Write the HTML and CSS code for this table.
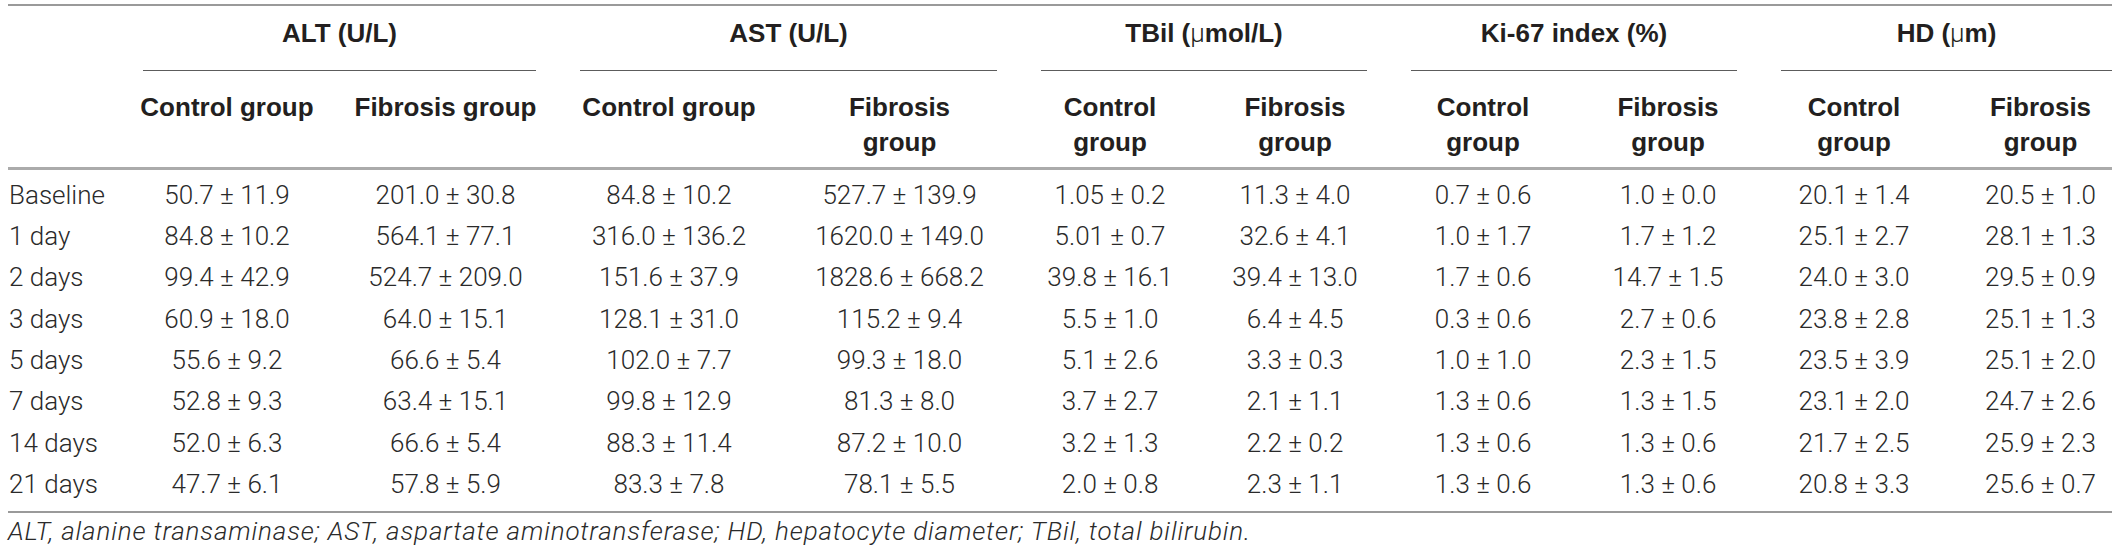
FILE: index.html
```html
<!DOCTYPE html>
<html lang="en">
<head>
    <meta charset="UTF-8">
    <title>Serum markers and hepatocyte measurements</title>
    <link rel="stylesheet" href="styles.css">
</head>
<body>
    <table class="results">
        <colgroup>
            <col class="c-stub">
            <col class="c-alt-ctrl">
            <col class="c-alt-fib">
            <col class="c-ast-ctrl">
            <col class="c-ast-fib">
            <col class="c-tbil-ctrl">
            <col class="c-tbil-fib">
            <col class="c-ki-ctrl">
            <col class="c-ki-fib">
            <col class="c-hd-ctrl">
            <col class="c-hd-fib">
        </colgroup>
        <thead>
            <tr class="group-row">
                <th class="stub"></th>
                <th colspan="2"><div class="group-title">ALT (U/L)</div></th>
                <th colspan="2"><div class="group-title">AST (U/L)</div></th>
                <th colspan="2"><div class="group-title">TBil (<span class="mu">μ</span>mol/L)</div></th>
                <th colspan="2"><div class="group-title">Ki-67 index (%)</div></th>
                <th colspan="2"><div class="group-title">HD (<span class="mu">μ</span>m)</div></th>
            </tr>
            <tr class="sub-row">
                <th class="stub"></th>
                <th>Control group</th>
                <th>Fibrosis group</th>
                <th>Control group</th>
                <th>Fibrosis<br>group</th>
                <th>Control<br>group</th>
                <th>Fibrosis<br>group</th>
                <th>Control<br>group</th>
                <th>Fibrosis<br>group</th>
                <th>Control<br>group</th>
                <th>Fibrosis<br>group</th>
            </tr>
        </thead>
        <tbody>
            <tr>
                <td>Baseline</td>
                <td>50.7 ± 11.9</td><td>201.0 ± 30.8</td>
                <td>84.8 ± 10.2</td><td>527.7 ± 139.9</td>
                <td>1.05 ± 0.2</td><td>11.3 ± 4.0</td>
                <td>0.7 ± 0.6</td><td>1.0 ± 0.0</td>
                <td>20.1 ± 1.4</td><td>20.5 ± 1.0</td>
            </tr>
            <tr>
                <td>1 day</td>
                <td>84.8 ± 10.2</td><td>564.1 ± 77.1</td>
                <td>316.0 ± 136.2</td><td>1620.0 ± 149.0</td>
                <td>5.01 ± 0.7</td><td>32.6 ± 4.1</td>
                <td>1.0 ± 1.7</td><td>1.7 ± 1.2</td>
                <td>25.1 ± 2.7</td><td>28.1 ± 1.3</td>
            </tr>
            <tr>
                <td>2 days</td>
                <td>99.4 ± 42.9</td><td>524.7 ± 209.0</td>
                <td>151.6 ± 37.9</td><td>1828.6 ± 668.2</td>
                <td>39.8 ± 16.1</td><td>39.4 ± 13.0</td>
                <td>1.7 ± 0.6</td><td>14.7 ± 1.5</td>
                <td>24.0 ± 3.0</td><td>29.5 ± 0.9</td>
            </tr>
            <tr>
                <td>3 days</td>
                <td>60.9 ± 18.0</td><td>64.0 ± 15.1</td>
                <td>128.1 ± 31.0</td><td>115.2 ± 9.4</td>
                <td>5.5 ± 1.0</td><td>6.4 ± 4.5</td>
                <td>0.3 ± 0.6</td><td>2.7 ± 0.6</td>
                <td>23.8 ± 2.8</td><td>25.1 ± 1.3</td>
            </tr>
            <tr>
                <td>5 days</td>
                <td>55.6 ± 9.2</td><td>66.6 ± 5.4</td>
                <td>102.0 ± 7.7</td><td>99.3 ± 18.0</td>
                <td>5.1 ± 2.6</td><td>3.3 ± 0.3</td>
                <td>1.0 ± 1.0</td><td>2.3 ± 1.5</td>
                <td>23.5 ± 3.9</td><td>25.1 ± 2.0</td>
            </tr>
            <tr>
                <td>7 days</td>
                <td>52.8 ± 9.3</td><td>63.4 ± 15.1</td>
                <td>99.8 ± 12.9</td><td>81.3 ± 8.0</td>
                <td>3.7 ± 2.7</td><td>2.1 ± 1.1</td>
                <td>1.3 ± 0.6</td><td>1.3 ± 1.5</td>
                <td>23.1 ± 2.0</td><td>24.7 ± 2.6</td>
            </tr>
            <tr>
                <td>14 days</td>
                <td>52.0 ± 6.3</td><td>66.6 ± 5.4</td>
                <td>88.3 ± 11.4</td><td>87.2 ± 10.0</td>
                <td>3.2 ± 1.3</td><td>2.2 ± 0.2</td>
                <td>1.3 ± 0.6</td><td>1.3 ± 0.6</td>
                <td>21.7 ± 2.5</td><td>25.9 ± 2.3</td>
            </tr>
            <tr>
                <td>21 days</td>
                <td>47.7 ± 6.1</td><td>57.8 ± 5.9</td>
                <td>83.3 ± 7.8</td><td>78.1 ± 5.5</td>
                <td>2.0 ± 0.8</td><td>2.3 ± 1.1</td>
                <td>1.3 ± 0.6</td><td>1.3 ± 0.6</td>
                <td>20.8 ± 3.3</td><td>25.6 ± 0.7</td>
            </tr>
        </tbody>
    </table>

    <p class="footnote">ALT, alanine transaminase; AST, aspartate aminotransferase; HD, hepatocyte diameter; TBil, total bilirubin.</p>
</body>
</html>
```

FILE: styles.css
```css
body {
    margin: 0;
    padding: 4px 8px 0;
    background: #fff;
    color: #231f20;
    font-family: Roboto, 'Liberation Sans', sans-serif;
}

.results {
    width: 2104px;
    table-layout: fixed;
    border-collapse: separate;
    border-spacing: 0;
    font-size: 26px;
}

/* column widths */
.c-stub { width: 113px; }
.c-alt-ctrl { width: 212px; }
.c-alt-fib { width: 225px; }
.c-ast-ctrl { width: 222px; }
.c-ast-fib { width: 239px; }
.c-tbil-ctrl { width: 182px; }
.c-tbil-fib { width: 188px; }
.c-ki-ctrl { width: 188px; }
.c-ki-fib { width: 182px; }
.c-hd-ctrl { width: 190px; }
.c-hd-fib { width: 163px; }

th {
    font-family: 'Liberation Sans', Arial, sans-serif;
    font-weight: 700;
    text-align: center;
    vertical-align: top;
    color: #231f20;
}

.group-row th {
    border-top: 2px solid #9a9a9a;
    padding: 12.5px 22px 0;
}

.group-row th:last-child {
    padding-right: 0;
}

.group-title {
    line-height: 29px;
    padding-bottom: 22px;
    border-bottom: 1.5px solid #5c5c5c;
}

.mu {
    font-family: Roboto, 'Liberation Sans', sans-serif;
    font-weight: 300;
}

.sub-row th {
    padding: 19.5px 0 6.5px;
    line-height: 35px;
    border-bottom: 3px solid #ababab;
}

.sub-row th:last-child {
    padding-left: 20px;
}

tbody td {
    padding: 6px 0;
    line-height: 29.3px;
    text-align: center;
    font-weight: 300;
    white-space: nowrap;
    color: #2a2a2a;
}

tbody td:first-child {
    text-align: left;
    padding-left: 1px;
}

tbody td:last-child {
    padding-left: 20px;
}

tbody tr:first-child td {
    padding-top: 11.35px;
}

tbody tr:last-child td {
    padding-bottom: 11.35px;
    border-bottom: 2px solid #9a9a9a;
}

.footnote {
    margin: 4.5px 0 0;
    font-size: 26px;
    line-height: 29px;
    letter-spacing: 0.85px;
    font-style: italic;
    font-weight: 300;
    color: #2a2a2a;
}
```
